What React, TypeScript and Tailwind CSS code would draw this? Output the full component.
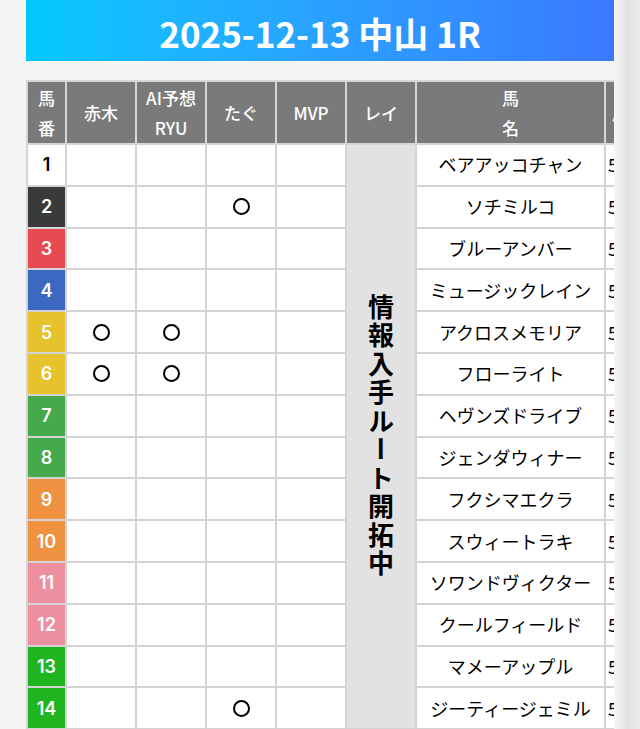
const rows = [
  { no: 1, bg: "bg-white", fg: "text-black", name: "ベアアッコチャン", marks: [] as number[] },
  { no: 2, bg: "bg-[#3a3a3a]", fg: "text-white", name: "ソチミルコ", marks: [2] },
  { no: 3, bg: "bg-[#e74a50]", fg: "text-white", name: "ブルーアンバー", marks: [] },
  { no: 4, bg: "bg-[#3c68c2]", fg: "text-white", name: "ミュージックレイン", marks: [] },
  { no: 5, bg: "bg-[#e6c22c]", fg: "text-white", name: "アクロスメモリア", marks: [0, 1] },
  { no: 6, bg: "bg-[#e6c22c]", fg: "text-white", name: "フローライト", marks: [0, 1] },
  { no: 7, bg: "bg-[#46a94b]", fg: "text-white", name: "ヘヴンズドライブ", marks: [] },
  { no: 8, bg: "bg-[#46a94b]", fg: "text-white", name: "ジェンダウィナー", marks: [] },
  { no: 9, bg: "bg-[#ee9140]", fg: "text-white", name: "フクシマエクラ", marks: [] },
  { no: 10, bg: "bg-[#ee9140]", fg: "text-white", name: "スウィートラキ", marks: [] },
  { no: 11, bg: "bg-[#ee8fa0]", fg: "text-white", name: "ソワンドヴィクター", marks: [] },
  { no: 12, bg: "bg-[#ee8fa0]", fg: "text-white", name: "クールフィールド", marks: [] },
  { no: 13, bg: "bg-[#1fb420]", fg: "text-white", name: "マメーアップル", marks: [] },
  { no: 14, bg: "bg-[#1fb420]", fg: "text-white", name: "ジーティージェミル", marks: [2] },
];

const font = "font-['Noto_Sans_CJK_JP','Noto_Sans',sans-serif]";

function Head({ children }: { children: React.ReactNode }) {
  return (
    <th className="border-2 border-[#d6d6d6] bg-[#7a7a7a] text-white font-medium text-[17px] leading-[30px] text-center align-middle">
      {children}
    </th>
  );
}

// ○ mark, drawn as a ring so the stroke is as thick as in the source
function Mark() {
  return (
    <span
      role="img"
      aria-label="○"
      className="block mx-auto w-[17px] h-[17px] rounded-full border-2 border-black"
    />
  );
}

export default function App() {
  return (
    <div className={`flex h-[729px] overflow-hidden bg-[#f4f4f4] ${font}`}>
      <div className="w-[26px] shrink-0" />
      <div className="w-[588px] shrink-0 overflow-hidden">
        <div className="h-[61px] flex items-center justify-center bg-gradient-to-r from-[#00c8ff] to-[#3a78ff]">
          <h1 className="text-white font-semibold text-[35px] leading-none pt-[4px]">2025-12-13 中山 1R</h1>
        </div>
        <div className="h-[19px]" />
        <table className="table-fixed border-collapse w-[660px]">
          <colgroup>
            <col className="w-[39px]" />
            <col className="w-[70px]" />
            <col className="w-[70px]" />
            <col className="w-[70px]" />
            <col className="w-[70px]" />
            <col className="w-[70px]" />
            <col className="w-[189px]" />
            <col className="w-[82px]" />
          </colgroup>
          <thead>
            <tr className="h-[63px]">
              <Head>馬<br />番</Head>
              <Head>赤木</Head>
              <Head>AI予想<br />RYU</Head>
              <Head>たぐ</Head>
              <Head>MVP</Head>
              <Head>レイ</Head>
              <Head>馬<br />名</Head>
              <Head><span className="block text-left pl-[6px]">斤量</span></Head>
            </tr>
          </thead>
          <tbody>
            {rows.map((r, i) => (
              <tr key={r.no} className="h-[41.8px]">
                <td className={`border-2 border-[#d4d4d4] ${r.bg} ${r.fg} text-center text-[18px] font-semibold font-['Inter',sans-serif]`}>
                  {r.no}
                </td>
                {[0, 1, 2, 3].map((c) => (
                  <td key={c} className="border-2 border-[#d4d4d4] bg-white text-center align-middle">
                    {r.marks.includes(c) ? <Mark /> : null}
                  </td>
                ))}
                {i === 0 && (
                  <td rowSpan={14} className="border-2 border-[#d4d4d4] bg-[#e2e2e2] text-center align-middle">
                    <span className="inline-block [writing-mode:vertical-rl] [text-orientation:upright] text-[26px] font-bold text-black tracking-[2.5px] pt-[4px]">
                      情報入手ルート開拓中
                    </span>
                  </td>
                )}
                <td className="border-2 border-[#d4d4d4] bg-white text-center text-[18px] text-black whitespace-nowrap">
                  {r.name}
                </td>
                <td className="border-2 border-[#d4d4d4] bg-white text-left pl-[2px] text-[18px] text-black">
                  55.0
                </td>
              </tr>
            ))}
          </tbody>
        </table>
      </div>
      <div className="flex-1 bg-gradient-to-r from-[#f7f7f7] via-[#e2e2e2] to-[#ececec]" />
    </div>
  );
}
